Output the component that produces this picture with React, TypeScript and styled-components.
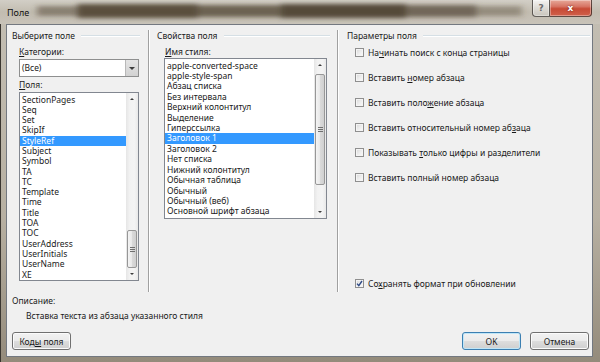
import styled, { createGlobalStyle } from "styled-components";

const FONT = `"Noto Sans", "Open Sans", "DejaVu Sans", sans-serif`;

const GlobalStyle = createGlobalStyle`
  html, body {
    margin: 0;
    padding: 0;
    background: #b9b4a9;
  }
  body {
    font-family: ${FONT};
    font-size: 8.5px;
    color: #1a1a1a;
  }
`;

const fieldNames = [
  "SectionPages", "Seq", "Set", "SkipIf", "StyleRef", "Subject", "Symbol", "TA", "TC",
  "Template", "Time", "Title", "TOA", "TOC", "UserAddress", "UserInitials", "UserName", "XE",
];

const styleNames = [
  "apple-converted-space", "apple-style-span", "Абзац списка", "Без интервала",
  "Верхний колонтитул", "Выделение", "Гиперссылка", "Заголовок 1", "Заголовок 2",
  "Нет списка", "Нижний колонтитул", "Обычная таблица", "Обычный", "Обычный (веб)",
  "Основной шрифт абзаца",
];

const fieldOptions = [
  "На&чинать поиск с конца страницы",
  "Вставить &номер абзаца",
  "Вставить поло&жение абзаца",
  "Вставить относительный номер аб&заца",
  "Показывать &только цифры и разделители",
  "Вставить полный номер абзаца",
];

// blurred shapes of the desktop seen through the glass caption
const blurBlobs = [
  { x: 8, y: 6, w: 40, h: 10, o: 0.5 },
  { x: 48, y: 4, w: 120, h: 14, o: 0.9 },
  { x: 168, y: 5, w: 82, h: 12, o: 0.75 },
  { x: 250, y: 4, w: 125, h: 14, o: 0.95 },
  { x: 375, y: 5, w: 70, h: 12, o: 0.7 },
  { x: 445, y: 6, w: 45, h: 10, o: 0.4 },
];

// "&" marks the access key letter, as in the dialog resources
const AccessText = ({ text }: { text: string }) => {
  const i = text.indexOf("&");
  if (i < 0) return <span>{text}</span>;
  return (
    <span>
      {text.slice(0, i)}
      <u>{text.charAt(i + 1)}</u>
      {text.slice(i + 2)}
    </span>
  );
};

const Window = styled.div`
  width: 600px;
  height: 362px;
  display: flex;
  flex-direction: column;
  background-color: #b3ab9c;
  background-image: linear-gradient(180deg, #c4bfb4, #b7b0a2 60%, #948b7b);
  box-shadow: inset 1px 0 0 #3a3630;
`;

const TitleBar = styled.div`
  height: 24px;
  flex-shrink: 0;
  display: flex;
  align-items: flex-start;
  background-color: #c6c1b7;
  background-image: linear-gradient(180deg, #d2cec6, #c2bcb0 50%, #c8c3b9);
`;

const Title = styled.div`
  padding: 7px 0 0 7px;
  font-size: 9px;
  line-height: 11px;
  color: #111;
`;

const GlassBlur = styled.svg`
  flex: 1;
  height: 24px;
  display: block;
`;

const CaptionButtons = styled.div`
  display: flex;
  margin-right: 8px;
`;

const CaptionButton = styled.div<{ $variant: "help" | "close" }>`
  height: 16px;
  width: ${(p) => (p.$variant === "close" ? "41px" : "16px")};
  display: flex;
  align-items: center;
  justify-content: center;
  font-family: "DejaVu Sans", sans-serif;
  font-size: 9px;
  font-weight: bold;
  border: 1px solid rgba(50, 45, 40, 0.75);
  border-top: none;
  border-left: ${(p) => (p.$variant === "close" ? "none" : "1px solid rgba(50,45,40,0.75)")};
  border-radius: ${(p) => (p.$variant === "close" ? "0 0 4px 0" : "0 0 0 4px")};
  color: ${(p) => (p.$variant === "close" ? "#fff" : "#6a6a6a")};
  text-shadow: ${(p) => (p.$variant === "close" ? "0 0 2px #5a1a10" : "none")};
  background: ${(p) =>
    p.$variant === "close"
      ? "linear-gradient(180deg, #e7a899 0%, #d77565 40%, #c74a35 55%, #d0604b 100%)"
      : "linear-gradient(180deg, #f4f3f1 0%, #dedbd5 50%, #c9c5bd 100%)"};
  box-shadow: inset 0 0 0 1px rgba(255, 255, 255, 0.35);
`;

const Client = styled.div`
  flex: 1;
  margin: 0 7px 5px 6px;
  border: 1px solid #737880;
  background: #f0f0f0;
  display: flex;
  flex-direction: column;
`;

const Columns = styled.div`
  display: grid;
  grid-template-columns: 142px 189px 1fr;
  height: 267px;
  padding-top: 5px;
  box-sizing: border-box;
`;

const Column = styled.div<{ $pad: string; $divider?: boolean }>`
  display: flex;
  flex-direction: column;
  padding: ${(p) => p.$pad};
  border-right: ${(p) => (p.$divider ? "1px solid #a0a0a0" : "none")};
  box-shadow: ${(p) => (p.$divider ? "1px 0 0 #ffffff" : "none")};
  min-width: 0;
`;

const GroupHeader = styled.div`
  display: flex;
  align-items: center;
  gap: 6px;
  height: 11px;
  line-height: 11px;
  white-space: nowrap;
`;

const Rule = styled.div`
  flex: 1;
  border-top: 1px solid #d5dfe5;
  border-bottom: 1px solid #ffffff;
`;

const FieldLabel = styled.div<{ $indent: number; $top: number }>`
  margin: ${(p) => p.$top}px 0 0 ${(p) => p.$indent}px;
  height: 11px;
  line-height: 11px;
`;

const ComboBox = styled.div`
  margin: 2px 0 0 7px;
  width: 120px;
  height: 18px;
  box-sizing: border-box;
  display: flex;
  border: 1px solid #8e8f8f;
  background: #fff;
`;

const ComboText = styled.div`
  flex: 1;
  padding-left: 2px;
  line-height: 16px;
`;

const DropButton = styled.div`
  width: 12px;
  display: flex;
  align-items: center;
  justify-content: center;
  background: linear-gradient(180deg, #e4e4e4, #d2d2d2);
  border-left: 1px solid #b8b8b8;
`;

const Arrow = styled.div<{ $dir: "up" | "down"; $size?: number }>`
  width: 0;
  height: 0;
  border-left: ${(p) => p.$size ?? 3}px solid transparent;
  border-right: ${(p) => p.$size ?? 3}px solid transparent;
  ${(p) =>
    p.$dir === "up"
      ? `border-bottom: ${p.$size ?? 3}px solid #3d3d3d;`
      : `border-top: ${p.$size ?? 3}px solid #3d3d3d;`}
`;

const ListBox = styled.div<{ $w: number; $h: number; $left: number; $top: number }>`
  margin: ${(p) => p.$top}px 0 0 ${(p) => p.$left}px;
  width: ${(p) => p.$w}px;
  height: ${(p) => p.$h}px;
  box-sizing: border-box;
  border: 1px solid #828790;
  background: #fff;
  display: flex;
`;

const Items = styled.div<{ $row: number }>`
  flex: 1;
  padding-top: 1.5px;
  overflow: hidden;

  & > div {
    height: ${(p) => p.$row}px;
    line-height: ${(p) => p.$row}px;
  }
`;

const ListItem = styled.div<{ $selected?: boolean }>`
  padding-left: 2px;
  white-space: nowrap;
  color: ${(p) => (p.$selected ? "#fff" : "#1a1a1a")};
  background: ${(p) => (p.$selected ? "#3399ff" : "transparent")};
`;

const ScrollBar = styled.div`
  width: 12px;
  display: flex;
  flex-direction: column;
  background: linear-gradient(90deg, #e6e6e6 0%, #f2f2f2 30%, #f4f4f4 70%, #e9e9e9 100%);
`;

const ScrollArrow = styled.div`
  height: 12px;
  flex-shrink: 0;
  display: flex;
  align-items: center;
  justify-content: center;
`;

const Track = styled.div`
  flex: 1;
`;

const Thumb = styled.div<{ $top: number; $h: number }>`
  margin: ${(p) => p.$top}px 1px 0 1px;
  height: ${(p) => p.$h}px;
  box-sizing: border-box;
  border: 1px solid #979797;
  border-radius: 2px;
  background: linear-gradient(90deg, #f4f4f4 0%, #e9e9e9 45%, #d9d9d9 55%, #d0d0d0 100%);
  display: flex;
  align-items: center;
  justify-content: center;
`;

const Grip = styled.div`
  width: 5px;
  height: 5px;
  background: repeating-linear-gradient(180deg, #6f6f6f 0 1px, transparent 1px 2px);
`;

const CheckList = styled.div`
  display: flex;
  flex-direction: column;
  gap: 14.2px;
  margin-top: 5.5px;
`;

const CheckRow = styled.div<{ $bottom?: boolean }>`
  display: flex;
  align-items: center;
  gap: 4px;
  margin-left: 8px;
  height: 11px;
  line-height: 11px;
  white-space: nowrap;
  ${(p) => (p.$bottom ? "margin-top: auto; margin-bottom: 3.5px;" : "")}
`;

const CheckBox = styled.div`
  width: 9px;
  height: 9px;
  box-sizing: border-box;
  border: 1px solid #8f8f8f;
  background: linear-gradient(135deg, #d6d6d6 0%, #ececec 50%, #fbfbfb 100%);
  box-shadow: inset 0 0 0 1px #f4f4f4;
  display: flex;
  align-items: center;
  justify-content: center;
`;

const Footer = styled.div`
  flex: 1;
  display: flex;
  flex-direction: column;
  padding: 2.5px 3px 0 5px;
`;

const DescLabel = styled.div`
  height: 11px;
  line-height: 11px;
`;

const DescText = styled.div`
  margin: 4px 0 0 14px;
  height: 11px;
  line-height: 11px;
`;

const ButtonRow = styled.div`
  margin-top: 11.5px;
  display: flex;
  gap: 9px;
`;

const Spacer = styled.div`
  flex: 1;
`;

const Button = styled.div<{ $default?: boolean }>`
  width: 59px;
  height: 18px;
  box-sizing: border-box;
  display: flex;
  align-items: center;
  justify-content: center;
  border: 1px solid ${(p) => (p.$default ? "#3c7fb1" : "#707070")};
  border-radius: 3px;
  background: linear-gradient(180deg, #f2f2f2 0%, #ebebeb 48%, #dddddd 52%, #cfcfcf 100%);
  box-shadow: inset 0 0 0 1px ${(p) => (p.$default ? "#bfe6f8" : "#fbfbfb")};
  white-space: nowrap;
`;

const CheckMark = () => (
  <svg width="7" height="7" viewBox="0 0 7 7">
    <path d="M1 3.6 L2.8 5.6 L6 1" fill="none" stroke="#2f4a85" strokeWidth="1.4" />
  </svg>
);

export default function App() {
  return (
    <>
      <GlobalStyle />
      <Window>
        <TitleBar>
          <Title>Поле</Title>
          <GlassBlur viewBox="0 0 500 24" preserveAspectRatio="none">
            <defs>
              <filter id="glass-blur" x="-20%" y="-100%" width="140%" height="300%">
                <feGaussianBlur stdDeviation="3 2" />
              </filter>
            </defs>
            <g filter="url(#glass-blur)" fill="#4f4332">
              {blurBlobs.map((b) => (
                <rect key={b.x} x={b.x} y={b.y} width={b.w} height={b.h} opacity={b.o} />
              ))}
            </g>
          </GlassBlur>
          <CaptionButtons>
            <CaptionButton $variant="help">?</CaptionButton>
            <CaptionButton $variant="close">x</CaptionButton>
          </CaptionButtons>
        </TitleBar>
        <Client>
          <Columns>
            <Column $pad="0 8px 0 5px" $divider>
              <GroupHeader>
                Выберите поле
                <Rule />
              </GroupHeader>
              <FieldLabel $indent={7} $top={5}>
                <AccessText text="&Категории:" />
              </FieldLabel>
              <ComboBox>
                <ComboText>(Все)</ComboText>
                <DropButton>
                  <Arrow $dir="down" />
                </DropButton>
              </ComboBox>
              <FieldLabel $indent={7} $top={2}>
                <AccessText text="&Поля:" />
              </FieldLabel>
              <ListBox $w={120} $h={189} $left={7} $top={2}>
                <Items $row={10.3}>
                  {fieldNames.map((f) => (
                    <ListItem key={f} $selected={f === "StyleRef"}>
                      {f}
                    </ListItem>
                  ))}
                </Items>
                <ScrollBar>
                  <ScrollArrow>
                    <Arrow $dir="up" $size={2.5} />
                  </ScrollArrow>
                  <Track>
                    <Thumb $top={125} $h={38}>
                      <Grip />
                    </Thumb>
                  </Track>
                  <ScrollArrow>
                    <Arrow $dir="down" $size={2.5} />
                  </ScrollArrow>
                </ScrollBar>
              </ListBox>
            </Column>

            <Column $pad="0 7px 0 8px" $divider>
              <GroupHeader>
                Свойства поля
                <Rule />
              </GroupHeader>
              <FieldLabel $indent={8} $top={5}>
                <AccessText text="&Имя стиля:" />
              </FieldLabel>
              <ListBox $w={163} $h={161} $left={7} $top={1}>
                <Items $row={10.43}>
                  {styleNames.map((s) => (
                    <ListItem key={s} $selected={s === "Заголовок 1"}>
                      {s}
                    </ListItem>
                  ))}
                </Items>
                <ScrollBar>
                  <ScrollArrow>
                    <Arrow $dir="up" $size={2.5} />
                  </ScrollArrow>
                  <Track>
                    <Thumb $top={3} $h={111}>
                      <Grip />
                    </Thumb>
                  </Track>
                  <ScrollArrow>
                    <Arrow $dir="down" $size={2.5} />
                  </ScrollArrow>
                </ScrollBar>
              </ListBox>
            </Column>

            <Column $pad="0 2px 0 9px">
              <GroupHeader>
                Параметры поля
                <Rule />
              </GroupHeader>
              <CheckList>
                {fieldOptions.map((o) => (
                  <CheckRow key={o}>
                    <CheckBox />
                    <AccessText text={o} />
                  </CheckRow>
                ))}
              </CheckList>
              <CheckRow $bottom>
                <CheckBox>
                  <CheckMark />
                </CheckBox>
                <AccessText text="Со&хранять формат при обновлении" />
              </CheckRow>
            </Column>
          </Columns>

          <Footer>
            <DescLabel>Описание:</DescLabel>
            <DescText>Вставка текста из абзаца указанного стиля</DescText>
            <ButtonRow>
              <Button>
                <AccessText text="Код&ы поля" />
              </Button>
              <Spacer />
              <Button $default>OK</Button>
              <Button>Отмена</Button>
            </ButtonRow>
          </Footer>
        </Client>
      </Window>
    </>
  );
}
